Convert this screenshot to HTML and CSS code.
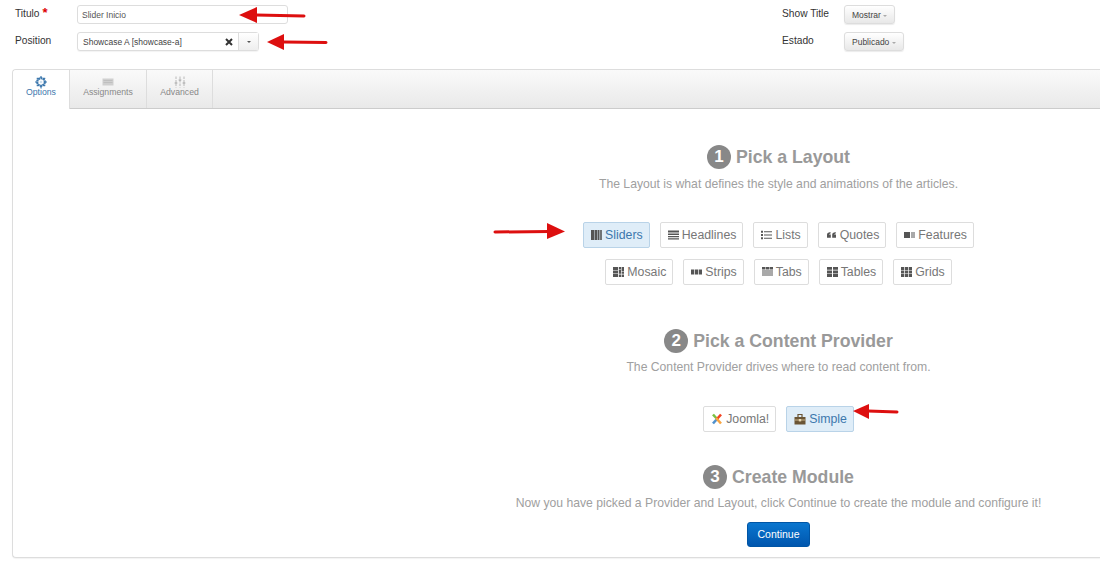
FILE: index.html
```html
<!DOCTYPE html>
<html lang="es">
<head>
<meta charset="utf-8">
<title>Slider Inicio</title>
<link rel="stylesheet" href="styles.css">
</head>
<body>
<div class="page">
  <form class="top">
    <div class="col col-left">
      <div class="row">
        <label class="lbl">Titulo <span class="req">*</span></label>
        <div class="input title-input">Slider Inicio</div>
      </div>
      <div class="row">
        <label class="lbl">Position</label>
        <div class="input select">
          <span class="select-text">Showcase A [showcase-a]</span>
          <svg class="select-x" viewBox="0 0 8 8" width="8" height="8"><path d="M1 1l6 6M7 1L1 7" stroke="#333" stroke-width="2"/></svg>
          <span class="select-caret"><i class="caret dark"></i></span>
        </div>
      </div>
    </div>
    <div class="col col-right">
      <div class="row">
        <label class="lbl lbl-r">Show Title</label>
        <div class="drop">Mostrar <i class="caret"></i></div>
      </div>
      <div class="row">
        <label class="lbl lbl-r">Estado</label>
        <div class="drop">Publicado <i class="caret"></i></div>
      </div>
    </div>
  </form>

  <section class="panel">
    <nav class="tabs">
      <div class="tab tab-options active">
        <svg class="tab-ico" viewBox="0 0 12 12" width="12" height="12"><circle cx="6" cy="6" r="3.800" fill="none" stroke="#3d78ad" stroke-width="2.200" stroke-dasharray="2 .4"/><circle cx="6" cy="6" r="1.300" fill="#cfe0ee"/><path d="M6 0v2M6 10v2M0 6h2M10 6h2M1.800 1.800l1.400 1.400M8.800 8.800l1.400 1.400M1.800 10.200l1.400-1.400M8.800 3.200l1.400-1.400" stroke="#3d78ad" stroke-width="1.200"/></svg>
        <span>Options</span>
      </div>
      <div class="tab tab-assign">
        <svg class="tab-ico" viewBox="0 0 12 12" width="12" height="12"><rect x=".5" y="2.500" width="11" height="7" fill="#cfcfcf"/><path d="M1.500 4.500h9M1.500 6.500h9" stroke="#b8b8b8" stroke-width=".7"/></svg>
        <span>Assignments</span>
      </div>
      <div class="tab tab-adv">
        <svg class="tab-ico" viewBox="0 0 12 12" width="12" height="12"><path d="M2 .5v11M6 .5v11M10 .5v11" stroke="#aaa" stroke-width=".8" stroke-dasharray="2.500 1"/><path d="M.7 7h2.600M4.700 4h2.600M8.700 7h2.600" stroke="#999" stroke-width="1"/></svg>
        <span>Advanced</span>
      </div>
    </nav>
    <div class="wizard">
      <h2 class="step-title step-one"><span class="num">1</span>Pick a Layout</h2>
      <p class="step-desc desc-one">The Layout is what defines the style and animations of the articles.</p>
      <div class="btn-row row-a">
        <span class="opt on"><svg class="ico" viewBox="0 0 11 10"><path d="M0 0h3v10H0zM3.500 0h3v10h-3zM7 0h1.500v10H7zM9.200 0h1.600v10H9.200z" fill="#555"/></svg>Sliders</span>
        <span class="opt"><svg class="ico" viewBox="0 0 11 10"><path d="M0 .5h11v2H0zM0 3.600h11v1.300H0zM0 5.900h11v1.300H0zM0 8.200h11v1.300H0z" fill="#555"/></svg>Headlines</span>
        <span class="opt"><svg class="ico" viewBox="0 0 11 10"><path d="M0 .8h2v2H0zM0 4h2v2H0zM0 7.200h2v2H0zM3 1.300h8v1H3zM3 4.500h8v1H3zM3 7.700h8v1H3z" fill="#555"/></svg>Lists</span>
        <span class="opt"><svg class="ico" viewBox="0 0 11 10"><path d="M1 4.800C1 3.400 1.900 2.400 4.500 2v1.400c-1 .2-1.400.6-1.500 1.100h1.800v3.300H1zM6.200 4.800c0-1.400.9-2.400 3.500-2.800v1.400c-1 .2-1.400.6-1.500 1.100H10v3.300H6.200z" fill="#555"/></svg>Quotes</span>
        <span class="opt"><svg class="ico" viewBox="0 0 11 10"><path d="M0 2h6v6H0zM7 2.500h4v1H7zM7 4.500h4v1H7zM7 6.500h4v1H7z" fill="#555"/></svg>Features</span>
      </div>
      <div class="btn-row row-b">
        <span class="opt"><svg class="ico" viewBox="0 0 11 10"><path d="M0 0h5v3H0zM0 3.600h5v2.800H0zM0 7h5v3H0zM5.800 0h2.200v2H5.800zM8.600 0H11v4H8.600zM5.800 2.600h2.200v4.200H5.800zM8.600 4.600H11v2.200H8.600zM5.800 7.400h2.200V10H5.800zM8.600 7.400H11V10H8.600z" fill="#555"/></svg>Mosaic</span>
        <span class="opt"><svg class="ico" viewBox="0 0 11 10"><path d="M0 2.500h3.200v5H0zM3.900 2.500h3.200v5H3.900zM7.800 2.500H11v5H7.800z" fill="#555"/></svg>Strips</span>
        <span class="opt"><svg class="ico" viewBox="0 0 11 10"><path d="M0 0h3.300v2.500H0zM3.800 0h3.300v2.500H3.800zM7.600 0H11v2.500H7.600zM0 3.500h11v1H0zM0 5.500h11v1H0zM0 7.500h11v1H0z" fill="#555"/></svg>Tabs</span>
        <span class="opt"><svg class="ico" viewBox="0 0 11 10"><path d="M0 0h5v2.800H0zM6 0h5v2.800H6zM0 3.400h5v2.800H0zM6 3.400h5v2.800H6zM0 6.800h5V10H0zM6 6.800h5V10H6z" fill="#555"/></svg>Tables</span>
        <span class="opt"><svg class="ico" viewBox="0 0 11 10"><path d="M0 0h3.200v3H0zM3.900 0h3.200v3H3.900zM7.800 0H11v3H7.800zM0 3.500h3.200v3H0zM3.900 3.500h3.200v3H3.900zM7.800 3.500H11v3H7.800zM0 7h3.200v3H0zM3.900 7h3.200v3H3.900zM7.800 7H11v3H7.800z" fill="#555"/></svg>Grids</span>
      </div>

      <h2 class="step-title step-two"><span class="num">2</span>Pick a Content Provider</h2>
      <p class="step-desc">The Content Provider drives where to read content from.</p>
      <div class="btn-row row-c">
        <span class="opt"><svg class="ico ico-lg" viewBox="0 0 12 12"><path d="M2 1.500 7 7" stroke="#7ac143" stroke-width="2.600"/><path d="M10 1.500 6 6" stroke="#f44321" stroke-width="2.600"/><path d="M2 10.500 6 6" stroke="#5091cd" stroke-width="2.600"/><path d="M10 10.500 5 5" stroke="#f9a541" stroke-width="2.600"/></svg>Joomla!</span>
        <span class="opt on"><svg class="ico ico-lg" viewBox="0 0 12 12"><path d="M.5 4h11v7.500H.5z" fill="#6b5535"/><path d="M4 4V1.500h4V4" fill="none" stroke="#6b5535" stroke-width="1.200"/><path d="M.5 7h11" stroke="#c9b48c" stroke-width="1"/><path d="M4.800 6h2.400v2.400H4.800z" fill="#e8d9b5"/></svg>Simple</span>
      </div>

      <h2 class="step-title step-three"><span class="num">3</span>Create Module</h2>
      <p class="step-desc">Now you have picked a Provider and Layout, click Continue to create the module and configure it!</p>
      <div class="btn-row row-d"><span class="continue">Continue</span></div>
    </div>
  </section>
</div>

<svg class="arrow a1" viewBox="0 0 67 16" width="67" height="16"><path d="M17 8l48 1" stroke="#dd0f0f" stroke-width="3" stroke-linecap="round"/><path d="M0 8 18 0v16z" fill="#dd0f0f"/></svg>
<svg class="arrow a2" viewBox="0 0 61 16" width="61" height="16"><path d="M17 8l42 .5" stroke="#dd0f0f" stroke-width="3" stroke-linecap="round"/><path d="M0 8 17 0v16z" fill="#dd0f0f"/></svg>
<svg class="arrow a3" viewBox="0 0 73 16" width="73" height="16"><path d="M2 9l54-.5" stroke="#dd0f0f" stroke-width="3" stroke-linecap="round"/><path d="M54 0l18 8.500L54 16z" fill="#dd0f0f"/></svg>
<svg class="arrow a4" viewBox="0 0 46 16" width="46" height="16"><path d="M15 8l29 1" stroke="#dd0f0f" stroke-width="3" stroke-linecap="round"/><path d="M0 8 16 1v15z" fill="#dd0f0f"/></svg>
</body>
</html>
```
FILE: styles.css
```css
* { box-sizing: border-box; }
html, body { margin: 0; height: 100%; }
body {
  position: relative;
  width: 1100px;
  height: 574px;
  overflow: hidden;
  background: #fff;
  font-family: "Liberation Sans", Arial, sans-serif;
  color: #333;
}
.page { width: 1100px; padding-top: 5px; }

.top { display: flex; height: 64px; }
.col-left { width: 782px; padding-left: 15px; }
.col { display: flex; flex-direction: column; gap: 8px; }
.row { display: flex; align-items: flex-start; height: 19px; }
.lbl { font-size: 10.200px; line-height: 17px; color: #333; width: 62px; }
.lbl-r { width: 62px; }
.req { color: #d00; font-weight: bold; font-size: 13px; line-height: 10px; }

.input {
  height: 19px;
  border: 1px solid #ddd;
  border-radius: 3px;
  background: #fff;
  font-size: 8.500px;
  line-height: 18px;
  color: #555;
  padding-left: 4px;
}
.title-input { width: 211px; }
.select {
  display: flex;
  align-items: stretch;
  width: 182px;
  padding: 0;
  color: #444;
  box-shadow: 0 1px 1px rgba(0, 0, 0, .05);
}
.select-text { padding-left: 5px; width: 147px; }
.select-x { align-self: center; flex: none; }
.select-caret {
  width: 20px;
  margin-left: auto;
  border-left: 1px solid #ddd;
  background: linear-gradient(#fff, #eee);
  display: flex;
  align-items: center;
  justify-content: center;
}
.caret {
  display: inline-block;
  width: 0;
  height: 0;
  border: 2.500px solid transparent;
  border-top: 2.500px solid #aaa;
  border-bottom: 0;
  vertical-align: middle;
}
.caret.dark { border-top-color: #555; }
.drop {
  height: 19px;
  padding: 0 7px;
  border: 1px solid #ddd;
  border-radius: 3px;
  background: linear-gradient(#fff, #e8e8e8);
  box-shadow: 0 1px 1px rgba(0, 0, 0, .08);
  font-size: 8.500px;
  line-height: 18px;
  color: #444;
}

.panel {
  width: 1088px;
  height: 489px;
  margin-left: 12px;
  border: 1px solid #ddd;
  border-right: 0;
  border-radius: 4px 0 0 4px;
  box-shadow: 0 1px 1px rgba(0, 0, 0, .05);
  background: #fff;
}
.tabs {
  display: flex;
  height: 39px;
  border-bottom: 1px solid #ccc;
  background: linear-gradient(#fafafa, #e9e9e9);
  border-radius: 4px 0 0 0;
}
.tab {
  display: flex;
  flex-direction: column;
  align-items: center;
  padding-top: 6px;
  border-right: 1px solid #ddd;
  font-size: 8.700px;
  line-height: 10px;
  color: #888;
}
.tab-ico { display: block; margin-bottom: -1px; }
.tab-options { width: 57px; height: 39px; }
.tab-assign { width: 77px; }
.tab-adv { width: 66px; }
.tab.active {
  background: #fff;
  color: #3d78ad;
  border-radius: 4px 0 0 0;
}

.wizard { text-align: center; padding-left: 444px; }
.step-title {
  margin: 0;
  font-size: 17.700px;
  line-height: 24px;
  font-weight: bold;
  color: #999;
}
.num {
  display: inline-block;
  width: 24px;
  height: 24px;
  margin-right: 5px;
  border-radius: 50%;
  background: #888;
  color: #fff;
  font-size: 17px;
  line-height: 24px;
  vertical-align: top;
}
.step-desc {
  margin: 7px 0 0;
  font-size: 12.200px;
  line-height: 14px;
  color: #a0a0a0;
}
.desc-one { margin-top: 8px; }
.step-one { margin-top: 36px; }
.step-two { margin-top: 44px; }
.step-three { margin-top: 33px; }

.btn-row { display: flex; justify-content: center; gap: 10px; }
.row-a { margin-top: 31px; }
.row-b { margin-top: 11px; }
.row-c { margin-top: 32px; }
.row-d { margin-top: 12px; }

.opt {
  display: inline-flex;
  align-items: center;
  height: 26px;
  padding: 0 6px 0 7px;
  border: 1px solid #ddd;
  border-radius: 2px;
  font-size: 12.300px;
  color: #777;
  background: #fff;
}
.opt.on {
  background: #dfedf8;
  border-color: #b9d3e8;
  color: #3d78ad;
}
.ico { width: 11px; height: 10px; margin-right: 3px; flex: none; }
.ico-lg { width: 12px; height: 12px; }
.continue {
  display: block;
  width: 63px;
  height: 25px;
  border: 1px solid #0055a5;
  border-radius: 3px;
  background: linear-gradient(#0a76cf, #0056ae);
  color: #fff;
  font-size: 10.500px;
  line-height: 23px;
}

.arrow { position: absolute; }
.a1 { left: 239px; top: 7px; }
.a2 { left: 267px; top: 34px; }
.a3 { left: 493px; top: 223px; }
.a4 { left: 853px; top: 403px; }
```
